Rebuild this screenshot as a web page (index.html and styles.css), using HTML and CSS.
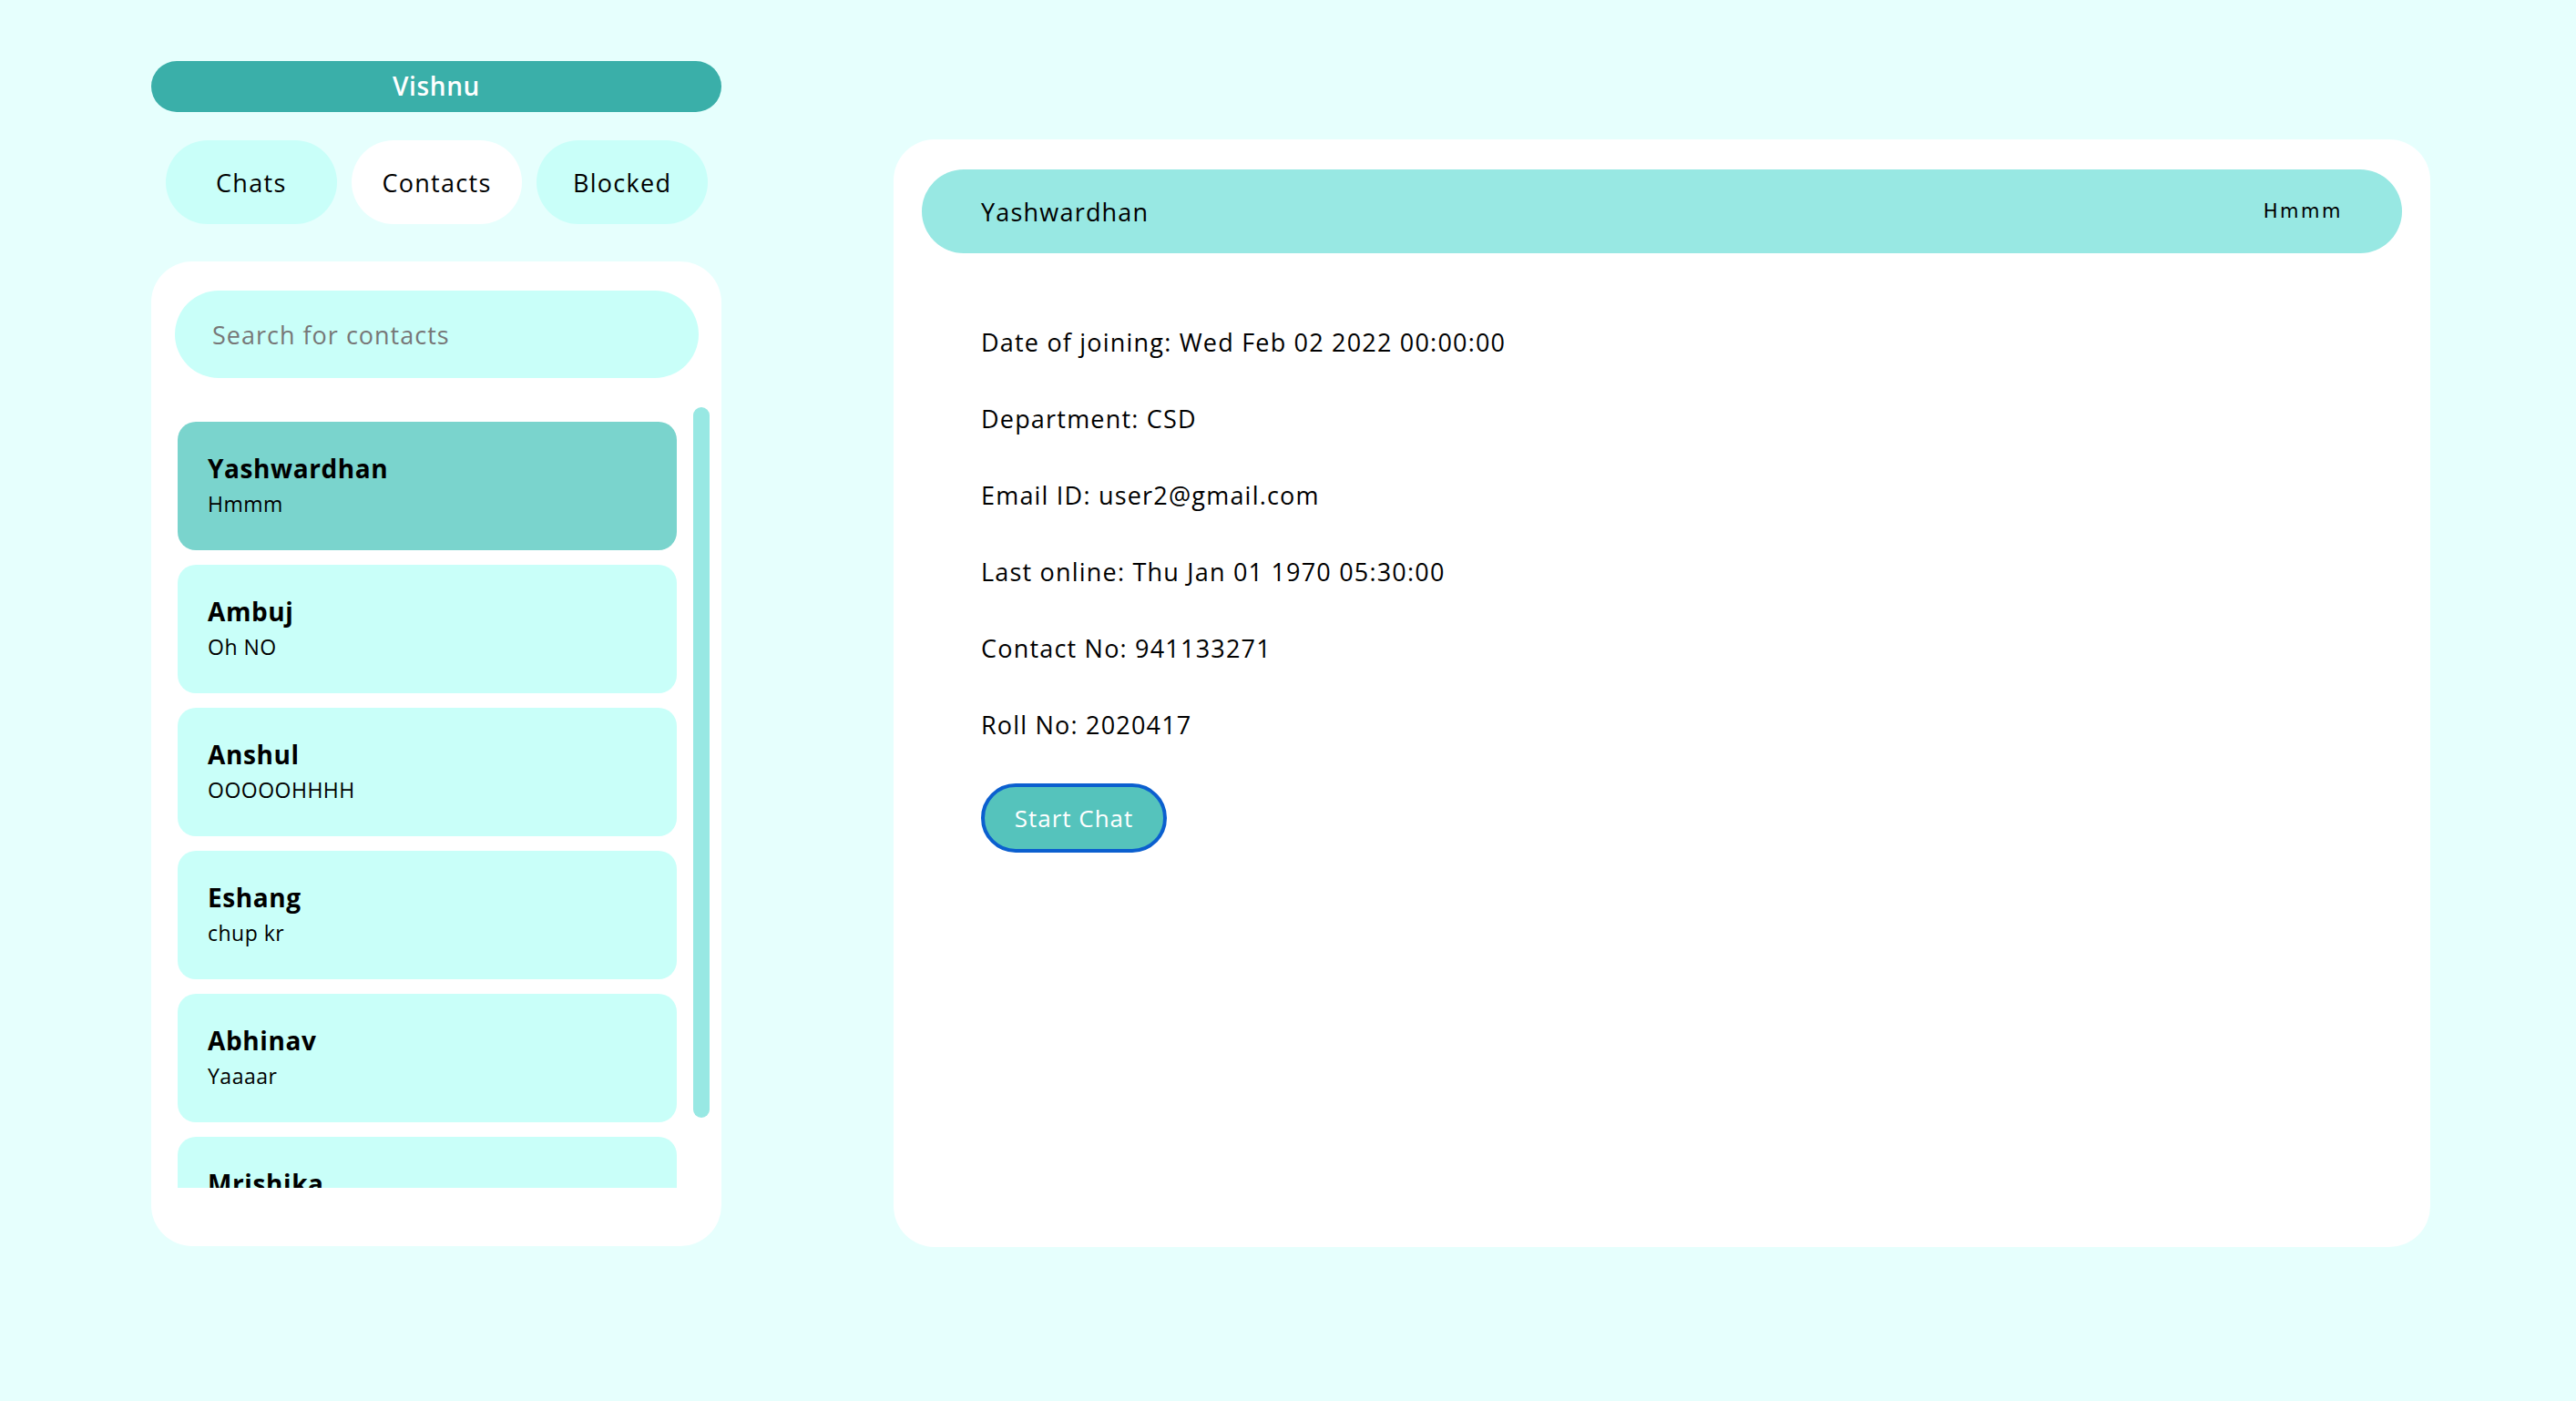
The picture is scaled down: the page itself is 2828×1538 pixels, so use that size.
FILE: index.html
```html
<!DOCTYPE html>
<html lang="en">
<head>
<meta charset="utf-8">
<title>Contacts</title>
<link rel="stylesheet" href="styles.css">
</head>
<body>
<div class="app">
  <aside class="sidebar">
    <div class="user-bar">Vishnu</div>
    <nav class="tabs">
      <button class="tab">Chats</button>
      <button class="tab tab-active">Contacts</button>
      <button class="tab">Blocked</button>
    </nav>
    <section class="contacts-panel">
      <input class="search" type="text" placeholder="Search for contacts">
      <div class="list-wrap">
        <div class="contact-list">
          <div class="contact contact-selected">
            <div class="contact-name">Yashwardhan</div>
            <div class="contact-msg">Hmmm</div>
          </div>
          <div class="contact">
            <div class="contact-name">Ambuj</div>
            <div class="contact-msg">Oh NO</div>
          </div>
          <div class="contact">
            <div class="contact-name">Anshul</div>
            <div class="contact-msg">OOOOOHHHH</div>
          </div>
          <div class="contact">
            <div class="contact-name">Eshang</div>
            <div class="contact-msg">chup kr</div>
          </div>
          <div class="contact">
            <div class="contact-name">Abhinav</div>
            <div class="contact-msg">Yaaaar</div>
          </div>
          <div class="contact">
            <div class="contact-name">Mrishika</div>
            <div class="contact-msg">Hello</div>
          </div>
        </div>
        <div class="scroll-track"><div class="scroll-thumb"></div></div>
      </div>
    </section>
  </aside>
  <main class="details">
    <header class="details-header">
      <span class="details-name">Yashwardhan</span>
      <span class="details-status">Hmmm</span>
    </header>
    <div class="details-body">
      <p class="info">Date of joining: Wed Feb 02 2022 00:00:00</p>
      <p class="info">Department: CSD</p>
      <p class="info">Email ID: user2@gmail.com</p>
      <p class="info">Last online: Thu Jan 01 1970 05:30:00</p>
      <p class="info">Contact No: 941133271</p>
      <p class="info">Roll No: 2020417</p>
      <button class="start-btn">Start Chat</button>
    </div>
  </main>
</div>
</body>
</html>
```
FILE: styles.css
```css
* { box-sizing: border-box; }
html, body {
  margin: 0;
  padding: 0;
  background: #e6fffd;
  font-family: "Open Sans", "DejaVu Sans", sans-serif;
  color: #000;
}
.app {
  display: flex;
  align-items: flex-start;
  padding: 67px 0 0 166px;
  gap: 189px;
}
.sidebar {
  width: 626px;
  display: flex;
  flex-direction: column;
}
.user-bar {
  height: 56px;
  border-radius: 28px;
  background: #3aafa9;
  color: #fff;
  font-weight: 600;
  font-size: 28px;
  letter-spacing: 0.6px;
  line-height: 54px;
  text-align: center;
}
.tabs {
  display: flex;
  gap: 16px;
  padding: 0 15px 0 16px;
  margin-top: 31px;
}
.tab {
  width: 188px;
  height: 92px;
  border: none;
  border-radius: 46px;
  background: #c9fff9;
  font-family: inherit;
  font-size: 27px;
  letter-spacing: 1.3px;
  color: #000;
  padding: 0;
}
.tab-active { background: #fff; }
.contacts-panel {
  margin-top: 41px;
  height: 1081px;
  background: #fff;
  border-radius: 45px;
  padding: 32px 13px 0 26px;
  display: flex;
  flex-direction: column;
}
.search {
  width: 575px;
  height: 96px;
  border: none;
  outline: none;
  border-radius: 48px;
  background: #c9fff9;
  padding: 0 0 0 41px;
  font-family: inherit;
  font-size: 27px;
  letter-spacing: 1px;
}
.search::placeholder { color: #777; }
.list-wrap {
  margin-top: 32px;
  height: 857px;
  display: flex;
}
.contact-list {
  width: 569px;
  height: 857px;
  overflow: hidden;
}
.scroll-track {
  width: 18px;
  height: 857px;
}
.scroll-thumb {
  width: 18px;
  height: 780px;
  border-radius: 9px;
  background: #98e8e3;
}
.contact {
  width: 548px;
  height: 141px;
  margin: 16px 0 0 3px;
  border-radius: 20px;
  background: #c9fff9;
  padding: 30px 0 0 33px;
}
.contact-selected { background: #7ad4cd; }
.contact-name {
  font-weight: 700;
  font-size: 28px;
  letter-spacing: 0.6px;
  line-height: 42px;
}
.contact-msg {
  font-size: 23px;
  letter-spacing: 0.5px;
  line-height: 36px;
}
.details {
  width: 1687px;
  height: 1216px;
  margin-top: 86px;
  background: #fff;
  border-radius: 45px;
  padding: 33px 31px;
}
.details-header {
  height: 92px;
  border-radius: 46px;
  background: #98e8e3;
  display: flex;
  align-items: center;
  justify-content: space-between;
  padding: 0 65px;
}
.details-name {
  font-size: 27px;
  letter-spacing: 1.2px;
}
.details-status {
  font-family: "DejaVu Sans", sans-serif;
  font-size: 21px;
  letter-spacing: 2.5px;
}
.details-body {
  padding: 77px 0 0 65px;
}
.info {
  margin: 0 0 42px;
  font-size: 27px;
  letter-spacing: 1.2px;
  line-height: 42px;
}
.info:last-of-type { margin-bottom: 43px; }
.start-btn {
  width: 204px;
  height: 76px;
  border: 4px solid #0b5fcf;
  border-radius: 38px;
  background: #55c3bc;
  color: #fff;
  font-family: inherit;
  font-size: 26px;
  letter-spacing: 1px;
  padding: 0;
}
```
